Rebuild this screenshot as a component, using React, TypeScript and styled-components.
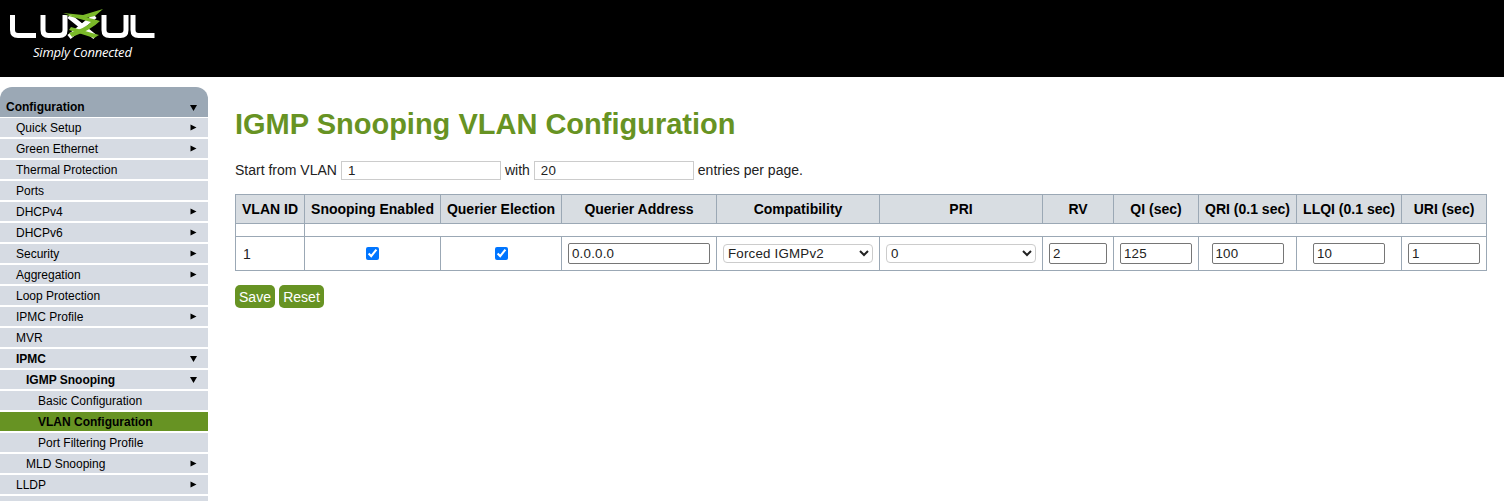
import React from 'react'
import styled, { createGlobalStyle } from 'styled-components'

const menu = [
  { label: 'Quick Setup', level: 1, arrow: 'right' },
  { label: 'Green Ethernet', level: 1, arrow: 'right' },
  { label: 'Thermal Protection', level: 1 },
  { label: 'Ports', level: 1 },
  { label: 'DHCPv4', level: 1, arrow: 'right' },
  { label: 'DHCPv6', level: 1, arrow: 'right' },
  { label: 'Security', level: 1, arrow: 'right' },
  { label: 'Aggregation', level: 1, arrow: 'right' },
  { label: 'Loop Protection', level: 1 },
  { label: 'IPMC Profile', level: 1, arrow: 'right' },
  { label: 'MVR', level: 1 },
  { label: 'IPMC', level: 1, arrow: 'down', bold: true },
  { label: 'IGMP Snooping', level: 2, arrow: 'down', bold: true },
  { label: 'Basic Configuration', level: 3 },
  { label: 'VLAN Configuration', level: 3, bold: true, active: true },
  { label: 'Port Filtering Profile', level: 3 },
  { label: 'MLD Snooping', level: 2, arrow: 'right' },
  { label: 'LLDP', level: 1, arrow: 'right' },
  { label: '', level: 1 },
]

const GlobalStyle = createGlobalStyle`
  html, body {
    margin: 0;
    padding: 0;
    height: 100%;
    overflow: hidden;
    background: #fff;
    font-family: "Liberation Sans", Arial, sans-serif;
  }
`

const Header = styled.header`
  height: 77px;
  background: #000;
  padding: 9px 0 0 9px;
  box-sizing: border-box;
`

const LogoBox = styled.div`
  width: 150px;
  display: flex;
  flex-direction: column;
`

const Tagline = styled.span`
  font-family: "Open Sans", sans-serif;
  font-style: italic;
  font-size: 13px;
  line-height: 15px;
  color: #fff;
  margin: 5px 0 0 24px;
  letter-spacing: -0.2px;
  white-space: nowrap;
`

const Body = styled.div`
  display: flex;
  padding-top: 10px;
`

const Sidebar = styled.nav`
  width: 208px;
  flex-shrink: 0;
`

const MenuTitle = styled.div`
  height: 30px;
  box-sizing: border-box;
  padding: 10px 11px 0 6px;
  background: #9ba8b5;
  border-radius: 12px 12px 0 0;
  display: flex;
  justify-content: space-between;
  align-items: center;
  font-size: 12px;
  font-weight: bold;
  color: #000;
  margin-bottom: 1px;
`

const MenuItem = styled.div<{ $level: number; $bold?: boolean; $active?: boolean }>`
  height: 19px;
  margin-bottom: 2px;
  box-sizing: border-box;
  padding: 0 11px 0 ${({ $level }) => ($level === 1 ? 16 : $level === 2 ? 26 : 38)}px;
  background: ${({ $active }) => ($active ? '#679323' : '#d6dbe3')};
  display: flex;
  justify-content: space-between;
  align-items: center;
  font-size: 12px;
  font-weight: ${({ $bold }) => ($bold ? 'bold' : 'normal')};
  color: #000;
`

const Content = styled.main`
  flex: 1;
  padding: 0 17px 0 27px;
  min-width: 0;
`

const Title = styled.h1`
  margin: 21px 0 20px;
  font-size: 29px;
  line-height: 33px;
  font-weight: bold;
  color: #679323;
`

const Paging = styled.div`
  display: flex;
  align-items: center;
  gap: 4px;
  font-size: 14px;
  line-height: 17px;
  color: #222;
  height: 19px;
  margin-bottom: 14px;
`

const PageInput = styled.input`
  width: 160px;
  height: 19px;
  box-sizing: border-box;
  border: 1px solid #ccc;
  padding: 0 6px;
  font: 13.33px "Liberation Sans", Arial, sans-serif;
  letter-spacing: 0.2px;
  color: #222;
  background: #fff;
  outline: none;
`

const Table = styled.table`
  border-collapse: collapse;
  table-layout: fixed;
  width: 1252px;
  font-size: 14px;
  color: #222;
`

const Th = styled.th`
  height: 28px;
  padding: 0;
  background: #d8dde2;
  border: 1px solid #9ba8b5;
  font-size: 14px;
  font-weight: bold;
  color: #000;
  text-align: center;
`

const Td = styled.td<{ $align?: string }>`
  height: 33px;
  padding: 0;
  border: 1px solid #9ba8b5;
  text-align: ${({ $align }) => $align || 'center'};
  vertical-align: middle;
`

const SpacerTd = styled.td`
  height: 12px;
  padding: 0;
  border: 1px solid #9ba8b5;
`

const IdText = styled.span`
  padding-left: 7px;
`

const Check = styled.input`
  width: 13px;
  height: 13px;
  margin: 0 0 2px;
  vertical-align: middle;
  accent-color: #0075ff;
`

const CellInput = styled.input<{ $w: number }>`
  width: ${({ $w }) => $w}px;
  height: 21px;
  box-sizing: border-box;
  border: 1px solid #767676;
  border-radius: 2px;
  padding: 0 3px;
  font: 13.33px "Liberation Sans", Arial, sans-serif;
  letter-spacing: 0.2px;
  color: #222;
  background: #fff;
  vertical-align: middle;
  outline: none;
`

const CellSelect = styled.select<{ $w: number }>`
  width: ${({ $w }) => $w}px;
  height: 19px;
  box-sizing: border-box;
  border: 1px solid #ccc;
  border-radius: 4px;
  padding: 0;
  font: 13.33px "Liberation Sans", Arial, sans-serif;
  letter-spacing: 0.2px;
  color: #222;
  background: #fff;
  vertical-align: middle;
  outline: none;
`

const Actions = styled.div`
  display: flex;
  gap: 4px;
  margin-top: 14px;
`

const Button = styled.button<{ $w: number }>`
  width: ${({ $w }) => $w}px;
  height: 23px;
  padding: 0;
  border: none;
  border-radius: 5px;
  background: #679323;
  color: #fff;
  font: 14px "Liberation Sans", Arial, sans-serif;
`

function Arrow({ dir }: { dir: string }) {
  return (
    <svg width="7" height="7" viewBox="0 0 7 7">
      {dir === 'down' ? <path d="M0 1h7L3.5 7z" fill="#000" /> : <path d="M0.5 0.5l6 3-6 3z" fill="#000" />}
    </svg>
  )
}

function Logo() {
  return (
    <svg width="147" height="31" viewBox="0 0 147 31">
      <g fill="none" stroke="#fff" strokeWidth="5" strokeLinejoin="round">
        <path d="M3.5 6v15q0 5.5 5.5 5.5h18" />
        <path d="M34 6v15q0 5.5 5.5 5.5h11q5.5 0 5.5-5.5V6" />
        <path d="M60 7l26 21M86 7L60 28" />
        <path d="M95 6v15q0 5.5 5.5 5.5h11q5.5 0 5.5-5.5V6" />
        <path d="M124 6v15q0 5.5 5.5 5.5h16" />
      </g>
      <g fill="#7ab929">
        <path d="M54 4l20 2 20-6-8 7-13 3z" />
        <path d="M56 6q20 1 35 6-9 9-28 16l-3-4q17-5 22-11-11-3-26-7z" />
        <path d="M62 18l28 8-5 3-25-8z" />
      </g>
    </svg>
  )
}

export default function App() {
  return (
    <>
      <GlobalStyle />
      <Header>
        <LogoBox>
          <Logo />
          <Tagline>Simply Connected</Tagline>
        </LogoBox>
      </Header>
      <Body>
        <Sidebar>
          <MenuTitle>
            Configuration
            <Arrow dir="down" />
          </MenuTitle>
          {menu.map((m, i) => (
            <MenuItem key={i} $level={m.level} $bold={m.bold} $active={m.active}>
              {m.label}
              {m.arrow && <Arrow dir={m.arrow} />}
            </MenuItem>
          ))}
        </Sidebar>
        <Content>
          <Title>IGMP Snooping VLAN Configuration</Title>
          <Paging>
            Start from VLAN
            <PageInput defaultValue="1" />
            with
            <PageInput defaultValue="20" />
            entries per page.
          </Paging>
          <Table>
            <colgroup>
              <col style={{ width: 69 }} />
              <col style={{ width: 136 }} />
              <col style={{ width: 121 }} />
              <col style={{ width: 155 }} />
              <col style={{ width: 163 }} />
              <col style={{ width: 163 }} />
              <col style={{ width: 71 }} />
              <col style={{ width: 85 }} />
              <col style={{ width: 98 }} />
              <col style={{ width: 105 }} />
              <col style={{ width: 85 }} />
            </colgroup>
            <thead>
              <tr>
                {['VLAN ID', 'Snooping Enabled', 'Querier Election', 'Querier Address', 'Compatibility', 'PRI', 'RV', 'QI (sec)', 'QRI (0.1 sec)', 'LLQI (0.1 sec)', 'URI (sec)'].map((h) => (
                  <Th key={h}>{h}</Th>
                ))}
              </tr>
            </thead>
            <tbody>
              <tr>
                <SpacerTd />
                <SpacerTd colSpan={10} />
              </tr>
              <tr>
                <Td $align="left">
                  <IdText>1</IdText>
                </Td>
                <Td>
                  <Check type="checkbox" defaultChecked />
                </Td>
                <Td>
                  <Check type="checkbox" defaultChecked />
                </Td>
                <Td>
                  <CellInput $w={142} defaultValue="0.0.0.0" />
                </Td>
                <Td>
                  <CellSelect $w={150} defaultValue="v2">
                    <option value="v2">Forced IGMPv2</option>
                  </CellSelect>
                </Td>
                <Td>
                  <CellSelect $w={150} defaultValue="0">
                    <option value="0">0</option>
                  </CellSelect>
                </Td>
                <Td>
                  <CellInput $w={58} defaultValue="2" />
                </Td>
                <Td>
                  <CellInput $w={72} defaultValue="125" />
                </Td>
                <Td>
                  <CellInput $w={72} defaultValue="100" />
                </Td>
                <Td>
                  <CellInput $w={72} defaultValue="10" />
                </Td>
                <Td>
                  <CellInput $w={72} defaultValue="1" />
                </Td>
              </tr>
            </tbody>
          </Table>
          <Actions>
            <Button $w={40}>Save</Button>
            <Button $w={45}>Reset</Button>
          </Actions>
        </Content>
      </Body>
    </>
  )
}
